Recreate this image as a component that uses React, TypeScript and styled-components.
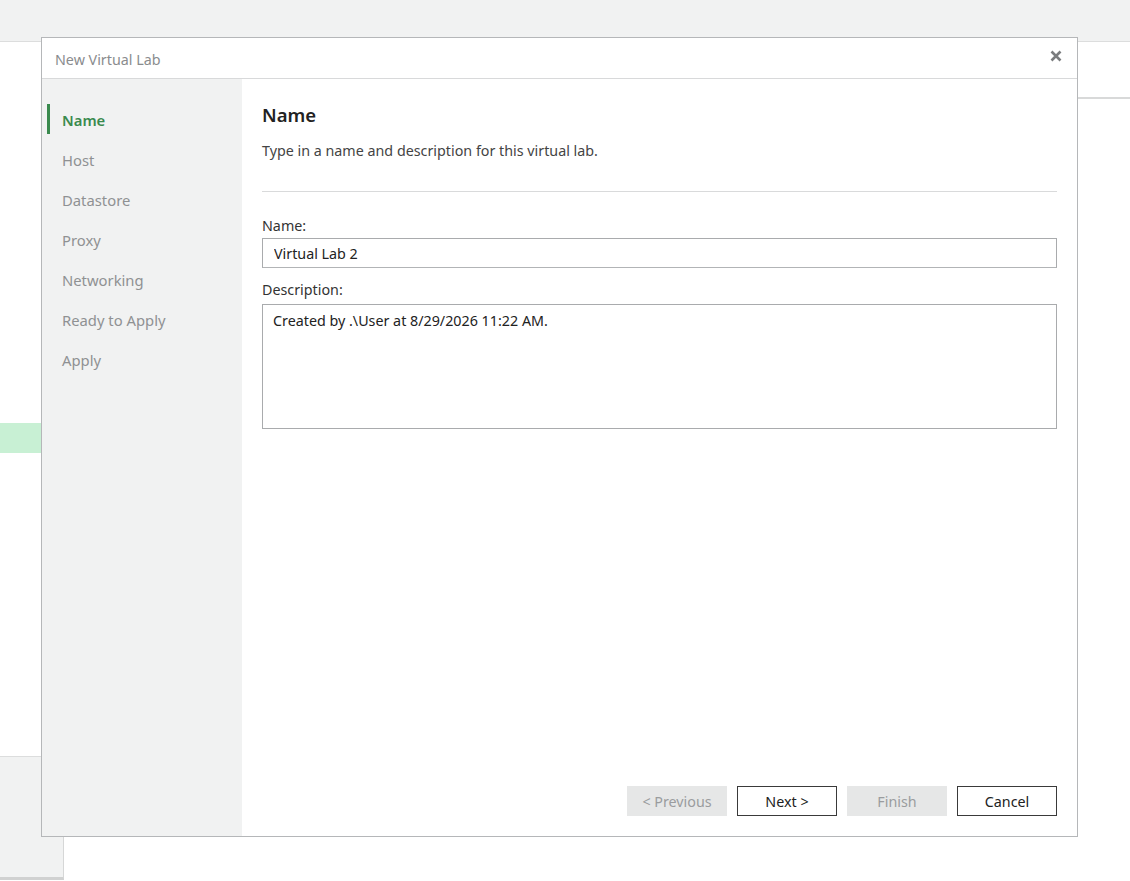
import React from "react";
import styled, { createGlobalStyle } from "styled-components";

const Global = createGlobalStyle`
  html, body { margin: 0; padding: 0; background: #ffffff; }
  body { font-family: "Noto Sans", "Open Sans", sans-serif; color: #222; }
  * { box-sizing: border-box; }
`;

const Page = styled.div`
  position: relative;
  width: 1130px;
  height: 881px;
  overflow: hidden;
  background: #fff;
`;

const TopBar = styled.div`
  height: 42px;
  background: #f1f2f2;
  border-bottom: 1px solid #dcdddd;
`;

const Main = styled.div`
  display: grid;
  grid-template-columns: 64px 1fr;
  height: calc(881px - 42px);
`;

const LeftCol = styled.div`
  display: flex;
  flex-direction: column;
`;

const SelectedRow = styled.div`
  margin-top: 381px;
  height: 30px;
  background: #c8f0d4;
`;

const BottomPanel = styled.div`
  margin-top: auto;
  margin-bottom: 1px;
  height: 124px;
  background: #f1f2f2;
  border-top: 1px solid #dcdddd;
  border-right: 1px solid #d6d7d7;
  border-bottom: 3px solid #d0d1d1;
`;

const RightCol = styled.div`
  display: flex;
  flex-direction: column;
`;

const PaneHeader = styled.div`
  height: 57px;
  border-bottom: 2px solid #d8d9d9;
`;

const Dialog = styled.div`
  position: absolute;
  left: 41px;
  top: 37px;
  width: 1037px;
  height: 800px;
  background: #fff;
  border: 1px solid #b5b7b9;
  display: flex;
  flex-direction: column;
`;

const DialogHeader = styled.div`
  height: 41px;
  flex: none;
  display: flex;
  align-items: center;
  justify-content: space-between;
  padding: 0 14px 0 13px;
  border-bottom: 1px solid #d8d9da;
`;

const DialogTitle = styled.div`
  font-size: 14.3px;
  color: #8a8c8e;
  padding-top: 2px;
`;

const CloseButton = styled.button`
  border: none;
  background: none;
  padding: 0;
  margin-top: -5px;
  width: 14px;
  height: 14px;
  display: flex;
  align-items: center;
  justify-content: center;
  cursor: pointer;
`;

const Body = styled.div`
  flex: 1;
  display: flex;
  min-height: 0;
`;

const Sidebar = styled.nav`
  width: 200px;
  flex: none;
  background: #f1f2f2;
  padding-top: 25px;
  display: flex;
  flex-direction: column;
  gap: 10px;
`;

const NavItem = styled.div<{ $active?: boolean }>`
  position: relative;
  height: 30px;
  display: flex;
  align-items: center;
  padding-left: 20px;
  padding-top: 1px;
  font-size: 14.8px;
  color: ${(p) => (p.$active ? "#3a8a4e" : "#8f9193")};
  font-weight: ${(p) => (p.$active ? 600 : 400)};
  &::before {
    content: "";
    display: ${(p) => (p.$active ? "block" : "none")};
    position: absolute;
    left: 5px;
    top: 0;
    width: 3px;
    height: 30px;
    background: #3a8a4e;
  }
`;

const Content = styled.div`
  flex: 1;
  display: flex;
  flex-direction: column;
  padding: 23px 20px 20px 20px;
`;

const Heading = styled.h1`
  margin: 0;
  font-size: 18.5px;
  font-weight: 600;
  color: #222;
  line-height: 26px;
`;

const Subtitle = styled.p`
  margin: 13px 0 0 0;
  font-size: 14.3px;
  line-height: 20px;
  color: #444;
`;

const Divider = styled.hr`
  margin: 30px 0 0 0;
  border: none;
  border-top: 1px solid #d9dadb;
`;

const Label = styled.label<{ $mt?: number; $mb?: number }>`
  display: block;
  font-size: 14.3px;
  line-height: 20px;
  color: #333;
  margin-top: ${(p) => p.$mt ?? 0}px;
  margin-bottom: ${(p) => p.$mb ?? 3}px;
`;

const TextInput = styled.input`
  width: 100%;
  height: 30px;
  border: 1px solid #a9abad;
  border-bottom-color: #b2b4b6;
  padding: 0 11px;
  font-family: inherit;
  font-size: 14.3px;
  color: #222;
  outline: none;
  background: #fff;
`;

const TextArea = styled.textarea`
  width: 100%;
  height: 125px;
  border: 1px solid #a9abad;
  padding: 6px 10px;
  font-family: inherit;
  font-size: 14.3px;
  line-height: 20px;
  color: #222;
  resize: none;
  outline: none;
`;

const Footer = styled.div`
  margin-top: auto;
  display: flex;
  justify-content: flex-end;
  gap: 10px;
`;

const Button = styled.button<{ $disabled?: boolean }>`
  width: 100px;
  height: 30px;
  font-family: inherit;
  font-size: 14.3px;
  background: ${(p) => (p.$disabled ? "#e6e7e7" : "#fff")};
  color: ${(p) => (p.$disabled ? "#9a9c9e" : "#222")};
  border: 1px solid ${(p) => (p.$disabled ? "#e6e7e7" : "#3a3a3a")};
  padding: 0;
  cursor: ${(p) => (p.$disabled ? "default" : "pointer")};
`;

const steps = ["Name", "Host", "Datastore", "Proxy", "Networking", "Ready to Apply", "Apply"];

export default function App() {
  return (
    <Page>
      <Global />
      <TopBar />
      <Main>
        <LeftCol>
          <SelectedRow />
          <BottomPanel />
        </LeftCol>
        <RightCol>
          <PaneHeader />
        </RightCol>
      </Main>
      <Dialog>
        <DialogHeader>
          <DialogTitle>New Virtual Lab</DialogTitle>
          <CloseButton aria-label="Close">
            <svg width="12" height="12" viewBox="0 0 12 12">
              <path d="M1.5 1.5 L10.5 10.5 M10.5 1.5 L1.5 10.5" stroke="#7a7c7e" strokeWidth="2.6" strokeLinecap="butt" />
            </svg>
          </CloseButton>
        </DialogHeader>
        <Body>
          <Sidebar>
            {steps.map((s, i) => (
              <NavItem key={s} $active={i === 0}>
                {s}
              </NavItem>
            ))}
          </Sidebar>
          <Content>
            <Heading>Name</Heading>
            <Subtitle>Type in a name and description for this virtual lab.</Subtitle>
            <Divider />
            <Label $mt={24} $mb={2}>Name:</Label>
            <TextInput defaultValue="Virtual Lab 2" />
            <Label $mt={12} $mb={4}>Description:</Label>
            <TextArea defaultValue="Created by .\User at 8/29/2026 11:22 AM." />
            <Footer>
              <Button $disabled>&lt; Previous</Button>
              <Button>Next &gt;</Button>
              <Button $disabled>Finish</Button>
              <Button>Cancel</Button>
            </Footer>
          </Content>
        </Body>
      </Dialog>
    </Page>
  );
}
